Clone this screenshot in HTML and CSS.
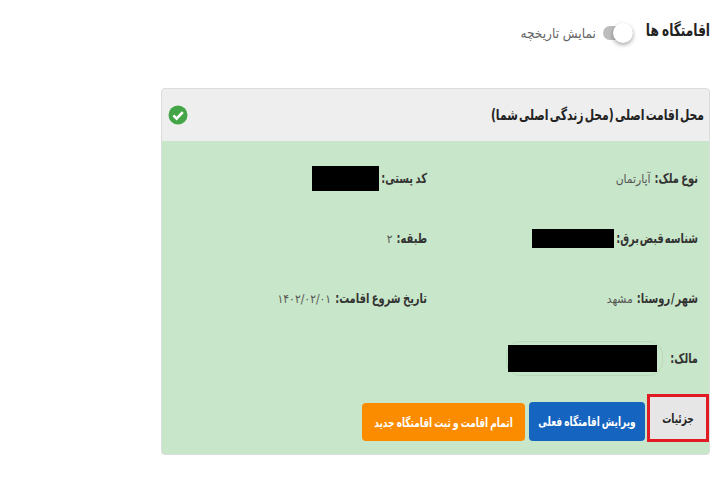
FILE: index.html
```html
<!DOCTYPE html>
<html lang="fa" dir="rtl">
<head>
<meta charset="utf-8">
<title>اقامتگاه ها</title>
<link rel="stylesheet" href="styles.css">
</head>
<body>
<main class="page">
  <header class="top">
    <h1 class="title">اقامتگاه ها</h1>
    <div class="history">
      <span class="switch"><span class="knob"></span></span>
      <span class="history-label">نمایش تاریخچه</span>
    </div>
  </header>
  <section class="card">
    <div class="card-head">
      <h2 class="card-title">محل اقامت اصلی (محل زندگی اصلی شما)</h2>
      <svg class="check" viewBox="0 0 20 20" width="20" height="20" aria-hidden="true">
        <circle cx="10" cy="10" r="9.5" fill="#43a548"/>
        <path d="M5.4 10.4 8.6 13.6 14.8 7.2" fill="none" stroke="#fff" stroke-width="2.6"/>
      </svg>
    </div>
    <div class="card-body">
      <div class="grid">
        <div class="cell"><b>نوع ملک:</b> <span>آپارتمان</span></div>
        <div class="cell"><b>کد پستی:</b><i class="mask mask-post"></i></div>
        <div class="cell"><b class="tight">شناسه قبض برق:</b><i class="mask mask-bill"></i></div>
        <div class="cell"><b>طبقه:</b> <span>۲</span></div>
        <div class="cell"><b class="tight">شهر / روستا:</b> <span>مشهد</span></div>
        <div class="cell"><b>تاریخ شروع اقامت:</b> <span>۱۴۰۲/۰۲/۰۱</span></div>
        <div class="cell"><b>مالک:</b><span class="pill"><i class="mask mask-owner"></i></span></div>
      </div>
      <div class="actions">
        <button class="btn btn-detail"><span class="btn-text">جزئیات</span></button>
        <button class="btn btn-blue"><span class="btn-text">ویرایش اقامتگاه فعلی</span></button>
        <button class="btn btn-orange"><span class="btn-text">اتمام اقامت و ثبت اقامتگاه جدید</span></button>
      </div>
    </div>
  </section>
</main>
</body>
</html>
```
FILE: styles.css
```css
* { box-sizing: border-box; }
html, body { margin: 0; background: #fff; }
body { width: 720px; height: 480px; overflow: hidden; font-family: "DejaVu Sans", "Noto Sans", sans-serif; font-stretch: condensed; color: #333; }
.page { padding: 0 10px; display: flex; flex-direction: column; }
.top { display: flex; align-items: center; height: 88px; padding-bottom: 28px; }
.title { margin: 0 0 0 13px; font-size: 13.5px; font-weight: 700; word-spacing: -1px; color: #222; white-space: nowrap; transform: scaleY(1.25); }
.history { display: flex; align-items: center; gap: 7px; margin-top: 6px; }
.switch { position: relative; width: 30px; height: 14px; background: #bdbdbd; border-radius: 7px; display: block; }
.knob { position: absolute; left: 10px; top: -3px; width: 20px; height: 20px; background: #fff; border-radius: 50%; box-shadow: 0 2px 4px rgba(0,0,0,.35); }
.history-label { font-size: 13.5px; color: #666; white-space: nowrap; }
.card { margin-left: 151px; height: 367px; border: 1px solid #dcdcdc; border-radius: 4px; overflow: hidden; background: #c8e6c9; display: flex; flex-direction: column; }
.card-head { height: 52px; flex: none; background: #eee; display: flex; align-items: center; justify-content: space-between; padding: 0 5px 0 6px; }
.card-title { margin: 0; font-size: 12px; font-weight: 700; word-spacing: -2.5px; color: #222; white-space: nowrap; transform: scaleY(1.25); }
.check { display: block; }
.card-body { flex: 1; display: flex; flex-direction: column; }
.grid { display: grid; grid-template-columns: 271px 1fr; grid-auto-rows: 60px; padding: 7.5px 11px 0 0; }
.cell { display: flex; align-items: center; gap: 2px; font-size: 12px; color: #555; white-space: nowrap; }
.cell b { color: #333; font-weight: 700; font-size: 11px; word-spacing: -1px; transform: scaleY(1.25); }
.cell .tight { word-spacing: -2.5px; }
.cell span { margin-right: 2px; }
.mask { display: block; background: #000; }
.mask-post { width: 67px; height: 25px; }
.mask-bill { width: 82px; height: 19px; }
.cell .pill { display: block; margin-right: 5px; padding: 3px 5px 3px 1px; border: 1px solid #b9d8ba; border-radius: 14px; }
.mask-owner { width: 149px; height: 27px; }
.actions { display: flex; align-items: flex-end; gap: 2px; margin-top: auto; padding-bottom: 12px; }
.btn { font-family: inherit; font-stretch: condensed; font-size: 10px; font-weight: 700; word-spacing: -1px; border-radius: 4px; white-space: nowrap; padding: 0; }
.btn-text { display: inline-block; transform: scaleY(1.25); }
.btn-detail { width: 62px; height: 48px; border: 3px solid #e01b24; border-radius: 0; background: #e6e6e6; color: #222; }
.btn-blue { width: 116px; height: 39px; margin-bottom: 1px; background: #1565c0; color: #fff; border: 0; }
.btn-orange { width: 163px; height: 38px; margin-right: 2px; margin-bottom: 1px; background: #fb8c00; color: #fff; border: 0; }
```
